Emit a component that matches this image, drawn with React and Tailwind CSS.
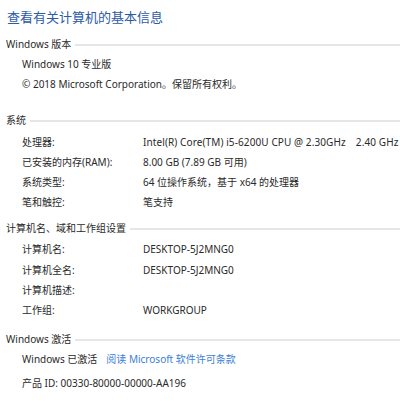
import React from "react";

const font = { fontFamily: '"Noto Sans", "Noto Sans CJK SC", sans-serif' };

function Header({ children, className = "" }) {
  return (
    <div className={`flex items-center h-5 pl-[6px] ${className}`}>
      <span className="whitespace-nowrap">{children}</span>
      <div className="flex-1 h-[2px] bg-[#e6e6e6] ml-[4px] mt-[2px]" />
    </div>
  );
}

function Row({ label, value, className = "" }) {
  return (
    <div className={`flex items-center h-5 pl-[22px] whitespace-nowrap ${className}`}>
      <span className="w-[121px] shrink-0">{label}</span>
      <span>{value}</span>
    </div>
  );
}

export default function App() {
  return (
    <div
      className="w-[400px] h-[401px] bg-white text-[10px] text-[#2a2a2a] overflow-hidden"
      style={font}
    >
      <div className="pt-[9px] pl-[7px] h-[25px] text-[13px] leading-[16px] text-[#2c5aa8]">
        查看有关计算机的基本信息
      </div>
      <Header className="mt-[9px]">Windows 版本</Header>
      <div className="flex items-center h-5 pl-[22px]">Windows 10 专业版</div>
      <div className="flex items-center h-5 pl-[22px] whitespace-nowrap">
        © 2018 Microsoft Corporation。保留所有权利。
      </div>
      <Header className="mt-[16px]">系统</Header>
      <Row
        className="mt-[2px]"
        label="处理器:"
        value={
          <span className="tracking-[0.1px]">
            Intel(R) Core(TM) i5-6200U CPU @ 2.30GHz<span className="ml-[10px]">2.40 GHz</span>
          </span>
        }
      />
      <Row label="已安装的内存(RAM):" value="8.00 GB (7.89 GB 可用)" />
      <Row label="系统类型:" value="64 位操作系统，基于 x64 的处理器" />
      <Row label="笔和触控:" value="笔支持" />
      <Header className="mt-[6px]">计算机名、域和工作组设置</Header>
      <Row className="mt-[1px]" label="计算机名:" value="DESKTOP-5J2MNG0" />
      <Row className="mt-[1px]" label="计算机全名:" value="DESKTOP-5J2MNG0" />
      <Row label="计算机描述:" value="" />
      <Row label="工作组:" value="WORKGROUP" />
      <Header className="mt-[9px]">Windows 激活</Header>
      <div className="flex items-center h-5 pl-[22px] whitespace-nowrap">
        <span>Windows 已激活</span>
        <span className="ml-[9px] text-[#3c7fd6]">阅读 Microsoft 软件许可条款</span>
      </div>
      <div className="flex items-center h-5 pl-[22px] mt-[4px] whitespace-nowrap">
        产品 ID: 00330-80000-00000-AA196
      </div>
    </div>
  );
}
